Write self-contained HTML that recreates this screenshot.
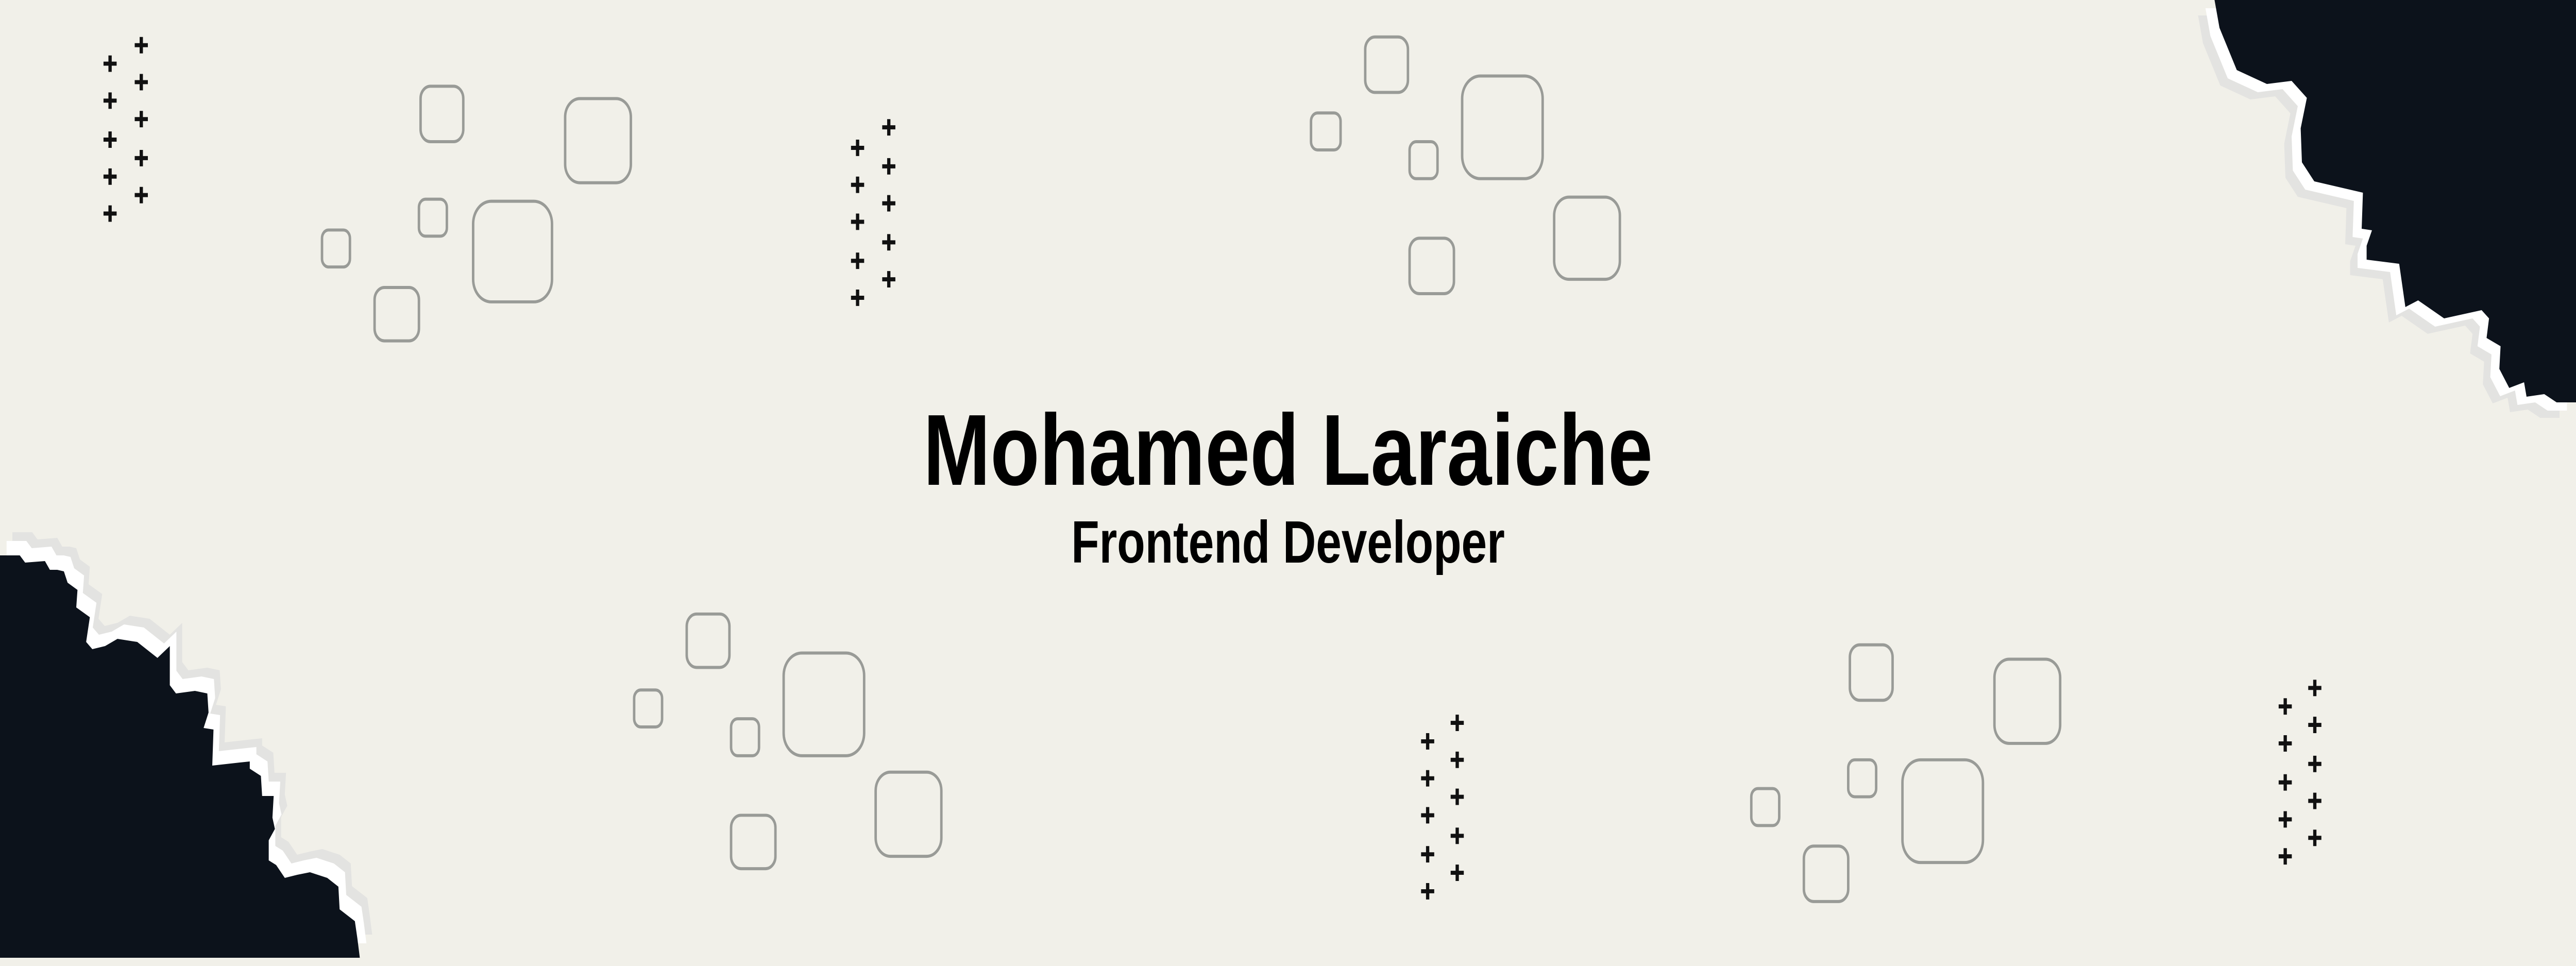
<!DOCTYPE html>
<html><head><meta charset="utf-8"><style>
html,body{margin:0;padding:0;background:#f1f0e9;width:100%;height:100%;overflow:hidden;}
svg{display:block;width:100vw;height:100vh;}
</style></head><body>
<svg viewBox="0 0 6250 1875" preserveAspectRatio="none" xmlns="http://www.w3.org/2000/svg">
<rect width="6250" height="1875" fill="#f1f0e9"/>
<defs>
<path id="tr" d="M5373,0 L5385,54 L5427,136 L5500,163 L5560,157 L5597,190 L5582,249 L5585,315 L5615,352 L5733,374 L5730,444 L5755,447 L5742,477 L5742,504 L5821,512 L5836,596 L5867,583 L5930,618 L6021,602 L6039,618 L6033,656 L6067,672 L6064,716 L6088,753 L6124,742 L6130,770 L6173,765 L6203,781 L6250,781 L6250,0 Z"/>
<path id="bl" d="M0,1078 L48,1078 L61,1092 L109,1089 L121,1106 L139,1106 L155,1109 L164,1131 L188,1145 L185,1179 L218,1198 L209,1246 L224,1260 L255,1254 L285,1240 L333,1246 L382,1277 L412,1254 L412,1330 L427,1346 L473,1341 L503,1346 L506,1383 L494,1413 L518,1416 L515,1486 L582,1480 L606,1478 L606,1492 L633,1506 L636,1545 L664,1545 L661,1587 L667,1609 L652,1631 L652,1670 L670,1679 L691,1704 L721,1698 L752,1693 L794,1704 L821,1721 L824,1765 L861,1788 L867,1821 L873,1859 L0,1859 Z"/>
</defs>
<use href="#tr" fill="#e3e3e1" transform="translate(-40,30)"/>
<use href="#tr" fill="#ffffff" transform="translate(-22,16)"/>
<use href="#tr" fill="#0c121b"/>
<use href="#bl" fill="#e3e3e1" transform="translate(30,-45)"/>
<use href="#bl" fill="#ffffff" transform="translate(16,-28)"/>
<use href="#bl" fill="#0c121b"/>
<rect x="0" y="1859" width="6250" height="16" fill="#f1f0e9"/>

<g transform="scale(3.986)" fill="none" stroke="#999b97" stroke-width="1.5">
<rect x="256" y="42" width="26" height="27" rx="6"/>
<rect x="344" y="48" width="40" height="41" rx="9"/>
<rect x="196" y="112" width="17" height="18" rx="4"/>
<rect x="255" y="97" width="17" height="18" rx="4"/>
<rect x="288" y="98" width="48" height="49" rx="11"/>
<rect x="228" y="140" width="27" height="26" rx="6"/>

<rect x="831" y="18" width="26" height="27" rx="6"/>
<rect x="890" y="37" width="49" height="50" rx="11"/>
<rect x="798" y="55" width="18" height="18" rx="4"/>
<rect x="858" y="69" width="17" height="18" rx="4"/>
<rect x="946" y="96" width="40" height="40" rx="9"/>
<rect x="858" y="116" width="27" height="27" rx="6"/>

<rect x="418" y="299" width="26" height="26" rx="6"/>
<rect x="477" y="318" width="49" height="50" rx="11"/>
<rect x="386" y="336" width="17" height="18" rx="4"/>
<rect x="445" y="350" width="17" height="18" rx="4"/>
<rect x="533" y="376" width="40" height="41" rx="9"/>
<rect x="445" y="397" width="27" height="26" rx="6"/>

<rect x="1126" y="314" width="26" height="27" rx="6"/>
<rect x="1214" y="321" width="40" height="41" rx="9"/>
<rect x="1066" y="384" width="17" height="18" rx="4"/>
<rect x="1125" y="370" width="17" height="18" rx="4"/>
<rect x="1158" y="370" width="49" height="50" rx="11"/>
<rect x="1098" y="412" width="27" height="27" rx="6"/>
</g>

<g transform="scale(3.986)" stroke="#111" stroke-width="2" fill="none">
<path d="M63,31h8M67,27v8 M63,49h8M67,45v8 M63,68h8M67,64v8 M63,86h8M67,82v8 M63,104h8M67,100v8
M82,22h8M86,18v8 M82,40h8M86,36v8 M82,58h8M86,54v8 M82,77h8M86,73v8 M82,95h8M86,91v8
M518,72h8M522,68v8 M518,90h8M522,86v8 M518,108h8M522,104v8 M518,127h8M522,123v8 M518,145h8M522,141v8
M537,62h8M541,58v8 M537,81h8M541,77v8 M537,99h8M541,95v8 M537,118h8M541,114v8 M537,136h8M541,132v8
M865,361h8M869,357v8 M865,379h8M869,375v8 M865,397h8M869,393v8 M865,416h8M869,412v8 M865,434h8M869,430v8
M883,352h8M887,348v8 M883,370h8M887,366v8 M883,388h8M887,384v8 M883,407h8M887,403v8 M883,425h8M887,421v8
M1387,344h8M1391,340v8 M1387,362h8M1391,358v8 M1387,381h8M1391,377v8 M1387,399h8M1391,395v8 M1387,417h8M1391,413v8
M1405,335h8M1409,331v8 M1405,353h8M1409,349v8 M1405,372h8M1409,368v8 M1405,390h8M1409,386v8 M1405,408h8M1409,404v8"/>
</g>

<text x="2240" y="941" font-family="Liberation Sans, sans-serif" font-weight="bold" font-size="196" fill="#000" textLength="1770" lengthAdjust="spacingAndGlyphs">Mohamed Laraiche</text>
<text x="2599" y="1092" font-family="Liberation Sans, sans-serif" font-weight="bold" font-size="116" fill="#000" textLength="1052" lengthAdjust="spacingAndGlyphs">Frontend Developer</text>
</svg>
</body></html>
